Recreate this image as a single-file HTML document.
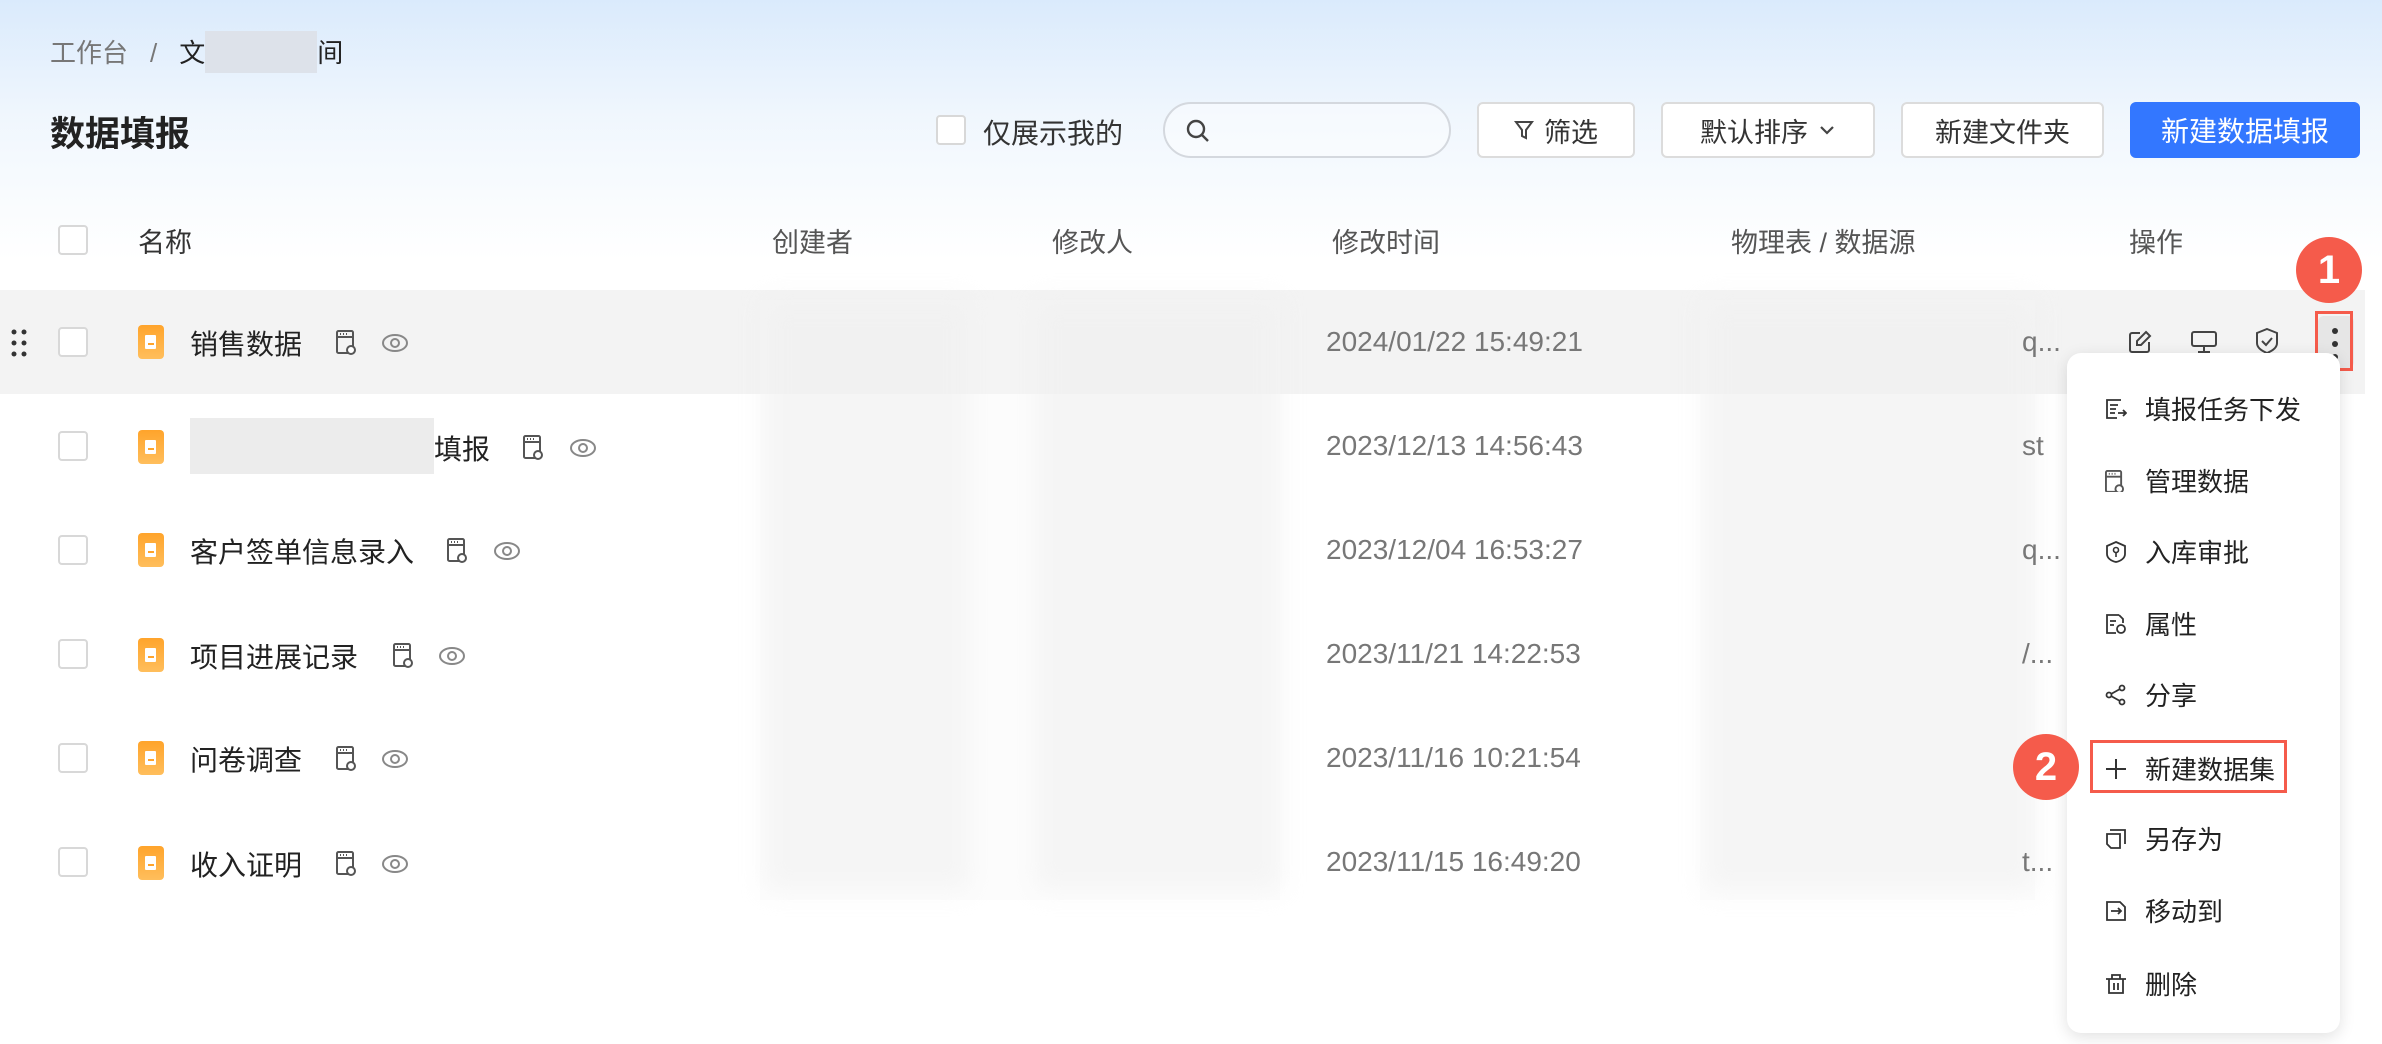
<!DOCTYPE html>
<html><head><meta charset="utf-8"><style>
*{margin:0;padding:0;box-sizing:border-box}
body{width:2382px;height:1044px;overflow:hidden;position:relative;font-family:"Liberation Sans","Noto Sans CJK SC",sans-serif;background:#fff;color:#222}
.bg{position:absolute;left:0;top:0;width:2382px;height:260px;background:linear-gradient(180deg,rgba(214,232,252,0.9) 0%,rgba(230,241,252,0.6) 45%,rgba(255,255,255,1) 100%)}
.a{position:absolute;white-space:nowrap}
.cb{position:absolute;width:30px;height:30px;border:2px solid #d8d8d8;border-radius:4px;background:#fff}
.btn{position:absolute;top:102px;height:56px;border:2px solid #dcdcdc;border-radius:6px;background:#fff;font-size:27px;color:#333;display:flex;align-items:center;justify-content:center;gap:10px}
.h{font-size:27px;color:#555;top:221px}
.row{font-size:28px}
.date{font-size:28px;color:#777;font-family:"Liberation Sans",sans-serif}
.fi{position:absolute;width:26px;height:34px;border-radius:4px;background:linear-gradient(180deg,#ffa42b,#ffbe5c)}
.fi:after{content:"";position:absolute;left:7px;top:10px;width:11px;height:14px;background:#fff;border-radius:1px}
.fi:before{content:"";position:absolute;left:10px;top:18px;width:6px;height:2px;background:#ffa42b;z-index:1}
.blur{position:absolute;background:#ececec;filter:blur(12px);opacity:.55}
.mi{position:absolute;left:2105px;font-size:26px;color:#222;display:flex;align-items:center;gap:18px}
.mi svg{width:22px;height:22px}
.circ{position:absolute;width:66px;height:66px;border-radius:50%;background:#f55b4b;color:#fff;font-size:40px;font-weight:bold;display:flex;align-items:center;justify-content:center}
</style></head><body>
<div class="bg"></div>

<div class="a" style="left:50px;top:33px;font-size:26px;color:#777">工作台<span style="margin:0 22px">/</span><span style="color:#222">文</span><span style="display:inline-block;width:112px;height:42px;background:#dde2ea;vertical-align:middle;margin-top:-6px"></span><span style="color:#222">间</span></div>
<div class="a" style="left:50px;top:106px;font-size:35px;font-weight:bold;color:#222">数据填报</div>

<div class="cb" style="left:936px;top:115px"></div>
<div class="a" style="left:983px;top:112px;font-size:28px;color:#333">仅展示我的</div>
<div class="a" style="left:1163px;top:102px;width:288px;height:56px;border:2px solid #d4d8de;border-radius:28px;background:rgba(255,255,255,.4)">
<svg style="position:absolute;left:20px;top:14px" width="26" height="26" viewBox="0 0 26 26"><circle cx="11" cy="11" r="8" fill="none" stroke="#444" stroke-width="2.4"/><path d="M17 17l6 6" stroke="#444" stroke-width="2.4"/></svg></div>
<div class="btn" style="left:1477px;width:158px"><svg width="20" height="22" viewBox="0 0 20 22"><path d="M2 3h16l-6 8v8l-4-2v-6z" fill="none" stroke="#444" stroke-width="2"/></svg>筛选</div>
<div class="btn" style="left:1661px;width:214px">默认排序<svg width="18" height="12" viewBox="0 0 18 12"><path d="M3 3l6 6 6-6" fill="none" stroke="#444" stroke-width="2.2"/></svg></div>
<div class="btn" style="left:1901px;width:203px">新建文件夹</div>
<div class="btn" style="left:2130px;width:230px;background:#3377ff;border-color:#3377ff;color:#fff;font-size:28px">新建数据填报</div>

<div class="cb" style="left:58px;top:225px"></div>
<div class="a h" style="left:138px;color:#333">名称</div>
<div class="a h" style="left:772px">创建者</div>
<div class="a h" style="left:1052px">修改人</div>
<div class="a h" style="left:1332px">修改时间</div>
<div class="a h" style="left:1731px">物理表 / 数据源</div>
<div class="a h" style="left:2129px">操作</div>

<div class="a" style="left:0;top:290px;width:2365px;height:104px;background:#f3f3f3"></div>
<svg class="a" style="left:10px;top:328px" width="18" height="30" viewBox="0 0 18 30"><g fill="#333"><circle cx="4" cy="4" r="2.5"/><circle cx="14" cy="4" r="2.5"/><circle cx="4" cy="15" r="2.5"/><circle cx="14" cy="15" r="2.5"/><circle cx="4" cy="26" r="2.5"/><circle cx="14" cy="26" r="2.5"/></g></svg>

<div class="blur" style="left:765px;top:300px;width:205px;height:590px"></div>
<div class="blur" style="left:1035px;top:300px;width:245px;height:590px"></div>
<div class="blur" style="left:1705px;top:300px;width:330px;height:590px"></div>
<div class="a" style="left:760px;top:300px;width:520px;height:600px;background:rgba(245,245,245,.35)"></div>
<div class="a" style="left:1700px;top:300px;width:335px;height:600px;background:rgba(245,245,245,.35)"></div>

<div class="cb" style="left:58px;top:327px"></div><div class="fi" style="left:138px;top:325px"></div>
<div class="a row" style="left:190px;top:323px">销售数据</div>
<div class="cb" style="left:58px;top:431px"></div><div class="fi" style="left:138px;top:430px"></div>
<div class="a" style="left:190px;top:418px;width:244px;height:56px;background:#ececec"></div><div class="a row" style="left:434px;top:428px">填报</div>
<div class="cb" style="left:58px;top:535px"></div><div class="fi" style="left:138px;top:533px"></div>
<div class="a row" style="left:190px;top:531px">客户签单信息录入</div>
<div class="cb" style="left:58px;top:639px"></div><div class="fi" style="left:138px;top:638px"></div>
<div class="a row" style="left:190px;top:636px">项目进展记录</div>
<div class="cb" style="left:58px;top:743px"></div><div class="fi" style="left:138px;top:741px"></div>
<div class="a row" style="left:190px;top:739px">问卷调查</div>
<div class="cb" style="left:58px;top:847px"></div><div class="fi" style="left:138px;top:846px"></div>
<div class="a row" style="left:190px;top:844px">收入证明</div>

<svg width="0" height="0" style="position:absolute"><defs>
<g id="tb"><rect x="1" y="1" width="16" height="22" rx="1.5" fill="none" stroke="#555" stroke-width="2"/><path d="M1 7h16M4 4h1M7 4h1M10 4h1" stroke="#555" stroke-width="2"/><circle cx="15" cy="20" r="4" fill="#fff" stroke="#555" stroke-width="2"/></g>
<g id="eye"><ellipse cx="13" cy="10" rx="12" ry="8" fill="none" stroke="#888" stroke-width="2"/><circle cx="13" cy="10" r="4" fill="none" stroke="#888" stroke-width="2"/></g>
</defs></svg>
<svg class="a" style="left:336px;top:330px" width="22" height="26"><use href="#tb"/></svg><svg class="a" style="left:382px;top:333px" width="26" height="20"><use href="#eye"/></svg>
<svg class="a" style="left:523px;top:435px" width="22" height="26"><use href="#tb"/></svg><svg class="a" style="left:570px;top:438px" width="26" height="20"><use href="#eye"/></svg>
<svg class="a" style="left:447px;top:538px" width="22" height="26"><use href="#tb"/></svg><svg class="a" style="left:494px;top:541px" width="26" height="20"><use href="#eye"/></svg>
<svg class="a" style="left:393px;top:643px" width="22" height="26"><use href="#tb"/></svg><svg class="a" style="left:439px;top:646px" width="26" height="20"><use href="#eye"/></svg>
<svg class="a" style="left:336px;top:746px" width="22" height="26"><use href="#tb"/></svg><svg class="a" style="left:382px;top:749px" width="26" height="20"><use href="#eye"/></svg>
<svg class="a" style="left:336px;top:851px" width="22" height="26"><use href="#tb"/></svg><svg class="a" style="left:382px;top:854px" width="26" height="20"><use href="#eye"/></svg>

<div class="a date" style="left:1326px;top:326px">2024/01/22 15:49:21</div>
<div class="a date" style="left:1326px;top:430px">2023/12/13 14:56:43</div>
<div class="a date" style="left:1326px;top:534px">2023/12/04 16:53:27</div>
<div class="a date" style="left:1326px;top:638px">2023/11/21 14:22:53</div>
<div class="a date" style="left:1326px;top:742px">2023/11/16 10:21:54</div>
<div class="a date" style="left:1326px;top:846px">2023/11/15 16:49:20</div>
<div class="a date" style="left:2022px;top:326px">q...</div>
<div class="a date" style="left:2022px;top:430px">st</div>
<div class="a date" style="left:2022px;top:534px">q...</div>
<div class="a date" style="left:2022px;top:638px">/...</div>
<div class="a date" style="left:2022px;top:846px">t...</div>

<svg class="a" style="left:2128px;top:330px" width="24" height="24" viewBox="0 0 24 24"><path d="M12 3H4a2 2 0 0 0-2 2v15a2 2 0 0 0 2 2h15a2 2 0 0 0 2-2v-8" fill="none" stroke="#444" stroke-width="2"/><path d="M18 2l4 4-9 9H9v-4z" fill="none" stroke="#444" stroke-width="2"/></svg>
<svg class="a" style="left:2191px;top:330px" width="26" height="24" viewBox="0 0 26 24"><rect x="1" y="2" width="24" height="14" rx="2" fill="none" stroke="#444" stroke-width="2"/><path d="M13 16v5M7 22h12" stroke="#444" stroke-width="2"/></svg>
<svg class="a" style="left:2255px;top:328px" width="24" height="26" viewBox="0 0 24 26"><path d="M12 1l10 4v10c0 5-5 8-10 10C7 23 2 20 2 15V5z" fill="none" stroke="#444" stroke-width="2"/><path d="M7 13l4 4 6-7" fill="none" stroke="#444" stroke-width="2"/></svg>
<div class="a" style="left:2318px;top:316px;width:36px;height:52px;background:#e6e6e6;border-radius:6px"></div>
<svg class="a" style="left:2329px;top:326px" width="12" height="36" viewBox="0 0 12 36"><g fill="#333"><circle cx="6" cy="5" r="3"/><circle cx="6" cy="18" r="3"/><circle cx="6" cy="31" r="3"/></g></svg>
<div class="a" style="left:2315px;top:311px;width:38px;height:60px;border:3px solid #f55b4b"></div>
<div class="circ" style="left:2296px;top:237px">1</div>

<div class="a" style="left:2067px;top:353px;width:273px;height:680px;background:#fff;border-radius:14px;box-shadow:0 4px 16px rgba(0,0,0,.12)"></div>
<div class="mi" style="top:390px"><svg viewBox="0 0 22 22"><path d="M16 2H2v18h10M5 7h8M5 11h6M5 15h5M13 15h8M18 12l3 3-3 3" fill="none" stroke="#333" stroke-width="1.8"/></svg>填报任务下发</div>
<div class="mi" style="top:462px"><svg viewBox="0 0 22 22"><use href="#tb" transform="scale(.95)"/></svg>管理数据</div>
<div class="mi" style="top:533px"><svg viewBox="0 0 22 22"><path d="M11 1l9 4v8c0 4-4 7-9 8-5-1-9-4-9-8V5z" fill="none" stroke="#333" stroke-width="1.8"/><circle cx="11" cy="9" r="2.5" fill="none" stroke="#333" stroke-width="1.6"/><path d="M11 11v5" stroke="#333" stroke-width="1.6"/></svg>入库审批</div>
<div class="mi" style="top:605px"><svg viewBox="0 0 22 22"><path d="M14 2H2v18h9M14 2l4 4v4M5 8h6M5 12h4" fill="none" stroke="#333" stroke-width="1.8"/><circle cx="16" cy="16" r="4" fill="none" stroke="#333" stroke-width="1.8"/></svg>属性</div>
<div class="mi" style="top:676px"><svg viewBox="0 0 22 22"><circle cx="4" cy="11" r="2.5" fill="none" stroke="#333" stroke-width="1.8"/><circle cx="17" cy="4" r="2.5" fill="none" stroke="#333" stroke-width="1.8"/><circle cx="17" cy="18" r="2.5" fill="none" stroke="#333" stroke-width="1.8"/><path d="M6 10l9-5M6 12l9 5" stroke="#333" stroke-width="1.8"/></svg>分享</div>
<div class="mi" style="top:750px"><svg viewBox="0 0 22 22"><path d="M11 1v20M1 11h20" stroke="#333" stroke-width="2"/></svg>新建数据集</div>
<div class="mi" style="top:820px"><svg viewBox="0 0 22 22"><path d="M5 2h15v14M2 6h13v14H6l-4-4z" fill="none" stroke="#333" stroke-width="1.8"/></svg>另存为</div>
<div class="mi" style="top:892px"><svg viewBox="0 0 22 22"><path d="M2 2h13l5 5v13H2z" fill="none" stroke="#333" stroke-width="1.8"/><path d="M6 11h10M13 8l3 3-3 3" fill="none" stroke="#333" stroke-width="1.8"/></svg>移动到</div>
<div class="mi" style="top:965px"><svg viewBox="0 0 22 22"><path d="M1 6h20M7 6V2h8v4M4 6v14h14V6M9 10v7M13 10v7" fill="none" stroke="#333" stroke-width="1.8"/></svg>删除</div>
<div class="a" style="left:2090px;top:740px;width:197px;height:53px;border:3px solid #f55b4b"></div>
<div class="circ" style="left:2013px;top:734px">2</div>
</body></html>
